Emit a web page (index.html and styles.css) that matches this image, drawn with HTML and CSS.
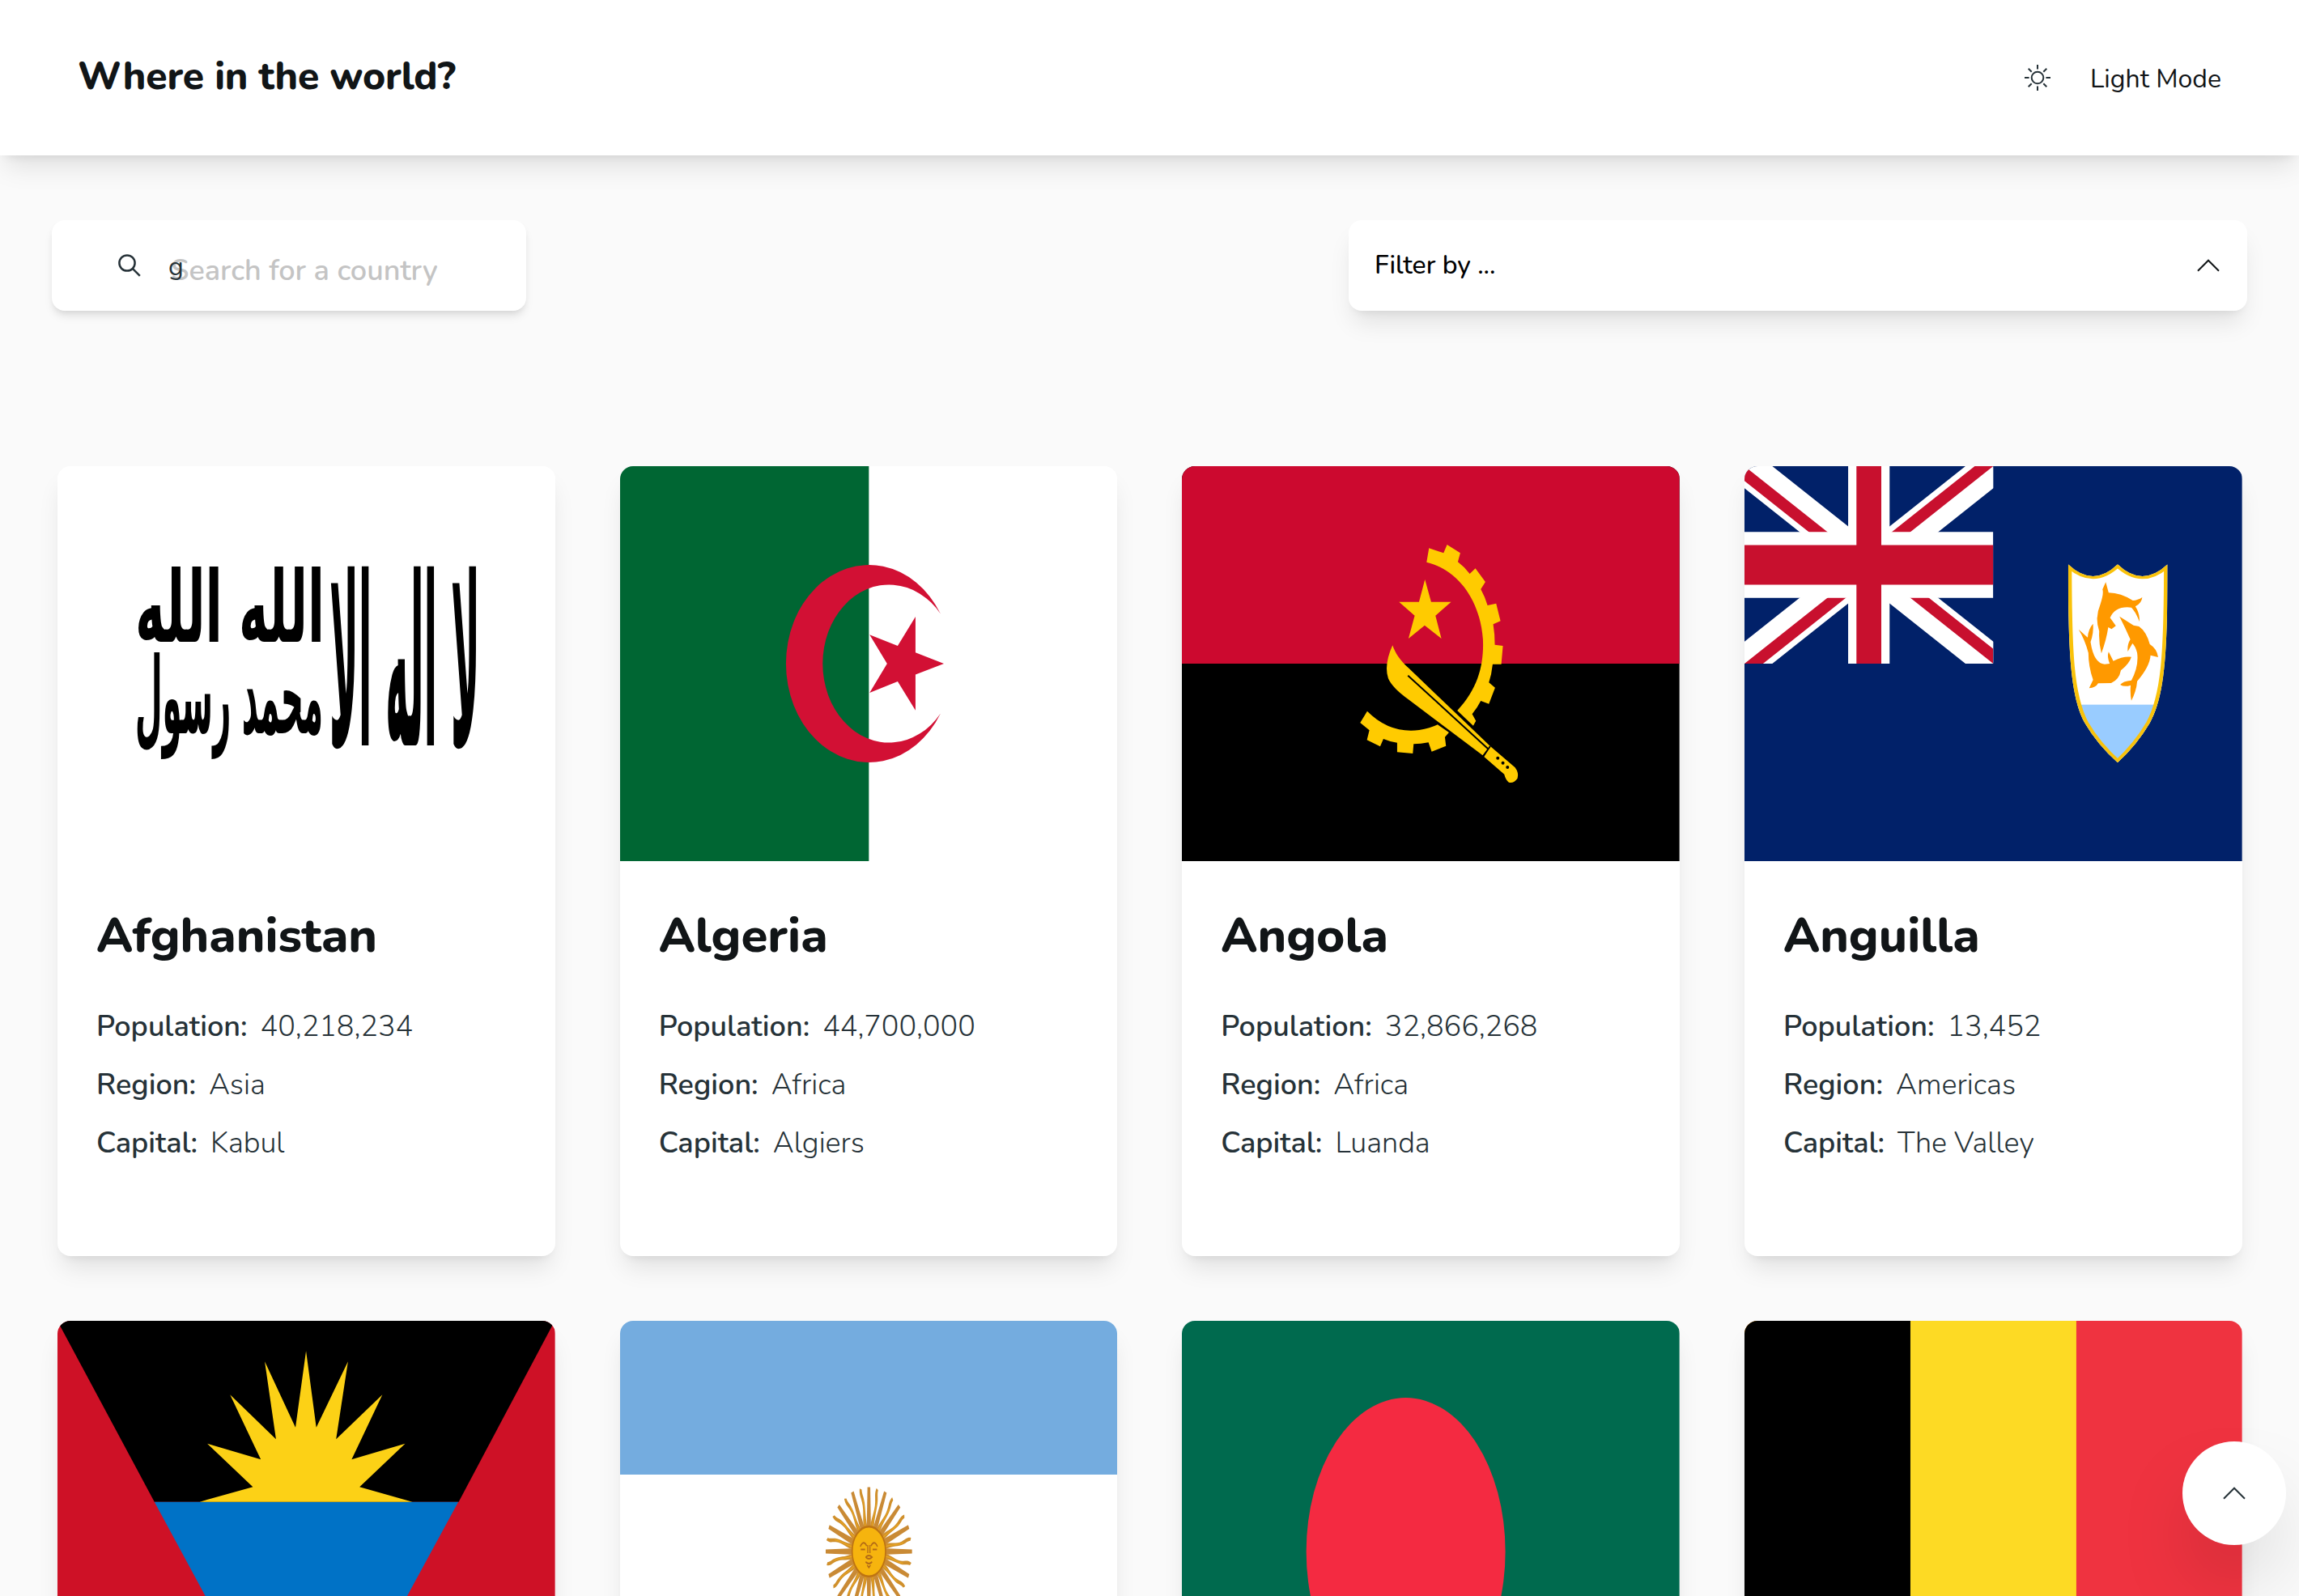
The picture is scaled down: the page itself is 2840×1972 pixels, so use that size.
FILE: index.html
```html
<!DOCTYPE html>
<html lang="en">
<head>
<meta charset="utf-8">
<title>Where in the world?</title>
<link rel="stylesheet" href="styles.css">
</head>
<body>
<header class="header">
  <h1 class="brand">Where in the world?</h1>
  <button class="mode" type="button">
    <svg class="mode-icon" viewBox="0 0 32 32" fill="none" stroke="currentColor" stroke-width="2"><circle cx="16" cy="16" r="7.3"/><path d="M16 0v5.6M16 26.4V32M0 16h5.6M26.4 16H32M4.7 4.7l4 4M23.3 23.3l4 4M4.7 27.3l4-4M23.3 8.7l4-4"/></svg>
    <span class="mode-label">Light Mode</span>
  </button>
</header>
<main class="main">
  <div class="controls">
    <div class="search">
      <svg class="search-icon" viewBox="0 0 28 28" fill="none" stroke="currentColor" stroke-width="2.5"><circle cx="11" cy="11" r="9.6"/><path d="M17.8 17.8l9 9"/></svg>
      <div class="field"><span class="hint">Search for a country</span><span class="typed">g</span></div>
    </div>
    <div class="filter">
      <span class="filter-label">Filter by ...</span>
      <svg class="chevron" viewBox="0 0 28 16" fill="none" stroke="currentColor" stroke-width="2"><path d="M1 14.7L14 1.7l13 13"/></svg>
    </div>
  </div>
  <section class="grid">
    <article class="card">
      <svg class="flag" viewBox="0 0 614.8 488" preserveAspectRatio="none">
        <rect width="614.8" height="488" fill="#fff"/>
        <g class="script" direction="rtl">
          <text transform="translate(522 345) scale(1 3.55)" font-size="82" textLength="186" lengthAdjust="spacingAndGlyphs">لا اله الا</text>
          <text transform="translate(330 217) scale(1 1.5)" font-size="82" textLength="106" lengthAdjust="spacingAndGlyphs">الله</text>
          <text transform="translate(204 217) scale(1 1.5)" font-size="82" textLength="108" lengthAdjust="spacingAndGlyphs">الله</text>
          <text transform="translate(328 330) scale(1 1.6)" font-size="82" textLength="232" lengthAdjust="spacingAndGlyphs">محمد رسول</text>
        </g>
      </svg>
      <div class="info">
        <h2 class="name">Afghanistan</h2>
        <p class="fact"><b>Population:</b><span>40,218,234</span></p>
        <p class="fact"><b>Region:</b><span>Asia</span></p>
        <p class="fact"><b>Capital:</b><span>Kabul</span></p>
      </div>
    </article>
    <article class="card">
      <svg class="flag" viewBox="0 0 614.8 488" preserveAspectRatio="none">
        <rect width="614.8" height="488" fill="#fff"/><rect width="307.4" height="488" fill="#063"/>
        <path fill="#d21034" d="M396 182.5A102.5 122 0 1 0 396 305.5A82 97.6 0 1 1 396 182.5ZM400.1 244L365 230.3V186L343 222 308.3 208.3 329.9 244 308.3 280 343 266 365 301.7V257.5Z"/>
      </svg>
      <div class="info">
        <h2 class="name">Algeria</h2>
        <p class="fact"><b>Population:</b><span>44,700,000</span></p>
        <p class="fact"><b>Region:</b><span>Africa</span></p>
        <p class="fact"><b>Capital:</b><span>Algiers</span></p>
      </div>
    </article>
    <article class="card">
      <svg class="flag" viewBox="0 0 614.8 488" preserveAspectRatio="none">
        <rect width="614.8" height="488"/><rect width="614.8" height="244" fill="#cc092f"/>
        <g transform="translate(180 64) scale(.33333)" fill="#ffcb00">
          <path d="M367 164L376 112 430 130 443 99 492 130 483 163Q506 180 527 207L548 187 585 237 568 264Q585 295 593 324L625 317 641 382 614 394Q620 430 620 470L650 474 644 542 612 542Q608 580 598 610L621 629 598 689 568 678Q555 704 536 727L550 752 540 770 481 714C560 630 580 540 576 450C565 300 480 190 367 164Z"/>
          <path d="M147 716Q230 800 340 786Q380 780 408 766L450 795 435 812 439 845 386 866 374 832Q345 838 319 838L316 873 258 868 258 833Q230 829 207 819L195 847 146 823 155 787 121 759Z"/>
          <path d="M241 472C250 500 270 530 300 556L603 846 575 880 300 673Q240 630 225 595Q208 545 241 472Z"/>
          <path d="M603 846L695 925Q710 945 704 965Q690 985 672 980Q660 970 655 950L580 885Z"/>
          <path d="M298 584L594 855M603 846L577 883" fill="none" stroke="#000" stroke-width="6"/>
          <g fill="#000"><circle cx="631" cy="890" r="6"/><circle cx="650" cy="908" r="6"/><circle cx="667" cy="924" r="6"/></g>
          <path d="M361 228L384 311H458L400 362 422 447 360 398 300 447 323 362 265 311H339Z"/>
        </g>
      </svg>
      <div class="info">
        <h2 class="name">Angola</h2>
        <p class="fact"><b>Population:</b><span>32,866,268</span></p>
        <p class="fact"><b>Region:</b><span>Africa</span></p>
        <p class="fact"><b>Capital:</b><span>Luanda</span></p>
      </div>
    </article>
    <article class="card">
      <svg class="flag" viewBox="0 0 614.8 488" preserveAspectRatio="none">
        <rect width="614.8" height="488" fill="#012169"/>
        <svg width="307.4" height="244" viewBox="0 0 60 30" preserveAspectRatio="none">
          <clipPath id="saltire"><path d="M30 15h30v15zv15H0zH0V0zV0h30z"/></clipPath>
          <path d="M0 0L60 30M60 0L0 30" stroke="#fff" stroke-width="6"/>
          <path d="M0 0L60 30M60 0L0 30" stroke="#c8102e" stroke-width="4" clip-path="url(#saltire)"/>
          <path d="M30 0V30M0 15H60" stroke="#fff" stroke-width="10"/>
          <path d="M30 0V30M0 15H60" stroke="#c8102e" stroke-width="6"/>
        </svg>
        <g transform="matrix(.44643 0 0 .33333 -14.8 -16)">
          <clipPath id="shield"><path id="shield-shape" d="M929 412Q998 500 1066 412Q1134 500 1204 412C1204 760 1195 900 1155 1000Q1120 1080 1066 1147Q1010 1080 975 1000C935 900 929 740 929 412Z"/></clipPath>
          <g clip-path="url(#shield)">
            <rect x="920" y="400" width="300" height="760" fill="#fff"/>
            <rect x="920" y="932" width="300" height="230" fill="#9cf"/>
            <use href="#shield-shape" fill="none" stroke="#f9c20a" stroke-width="20"/>
          </g>
          <g fill="#f90">
            <path d="M1033 478L1041 517Q1075 518 1108 546Q1122 545 1134 534Q1133 555 1115 568Q1128 595 1126 624Q1117 590 1104 572Q1060 565 1045 610L1061 640 1049 652 1040 645Q1035 690 1021 742Q1013 700 1015 660Q1002 610 1018 560Q1028 520 1024 505Z"/>
            <path d="M1071 605L1110 638 1125 642Q1145 660 1155 708Q1175 725 1178 756L1157 749Q1155 790 1120 845Q1118 880 1104 917Q1100 890 1102 860Q1085 868 1073 858Q1080 845 1104 842Q1125 790 1120 740Q1115 715 1107 705L1094 735Q1092 710 1101 690Q1088 650 1071 605Z"/>
            <path d="M958 653L983 683Q985 650 998 632Q1000 665 991 700Q1000 780 1030 782L1044 780Q1036 755 1041 736L1054 770Q1080 752 1104 755Q1098 780 1075 805Q1070 840 1048 852L1012 853Q1005 870 987 871L998 840Q985 790 985 740Q975 690 958 653Z"/>
          </g>
        </g>
      </svg>
      <div class="info">
        <h2 class="name">Anguilla</h2>
        <p class="fact"><b>Population:</b><span>13,452</span></p>
        <p class="fact"><b>Region:</b><span>Americas</span></p>
        <p class="fact"><b>Capital:</b><span>The Valley</span></p>
      </div>
    </article>
    <article class="card">
      <svg class="flag tall" viewBox="0 0 614.8 570" preserveAspectRatio="none">
        <rect width="614.8" height="570" fill="#ce1126"/>
        <g transform="matrix(.40816 0 0 .33333 -10.4 -22)">
          <path d="M25 66H1531L1240 737H319Z"/><path d="M319 737H1239L778 1776Z" fill="#0072c6"/>
          <path fill="#fcd116" d="M456 737L617 682 479 521 641 580 548 340 687 505 653 217 746 461 778 178 809 461 905 217 869 505 1009 340 916 580 1078 521 940 682 1100 737Z"/>
        </g>
      </svg>
    </article>
    <article class="card">
      <svg class="flag tall" viewBox="0 0 614.8 570" preserveAspectRatio="none">
        <rect width="614.8" height="570" fill="#fff"/><rect width="614.8" height="190" fill="#74acdf"/>
        <defs>
          <g id="rays2"><path d="M-8 -50L-5.2 -160H5.2L8 -50Z" fill="#c98a35"/><path transform="rotate(11.25)" d="M-7 -50C-9 -85 3 -100 -1 -125C-3 -140 -8 -145 -3 -160L4 -156C2 -145 8 -138 8 -122C8 -100 3 -85 8 -50Z" fill="#d0902c"/><path transform="rotate(11.25)" d="M0 -60C-2 -90 6 -100 4 -130" stroke="#f0ac1c" stroke-width="2" fill="none"/></g>
          <g id="rays4"><use href="#rays2"/><use href="#rays2" transform="rotate(22.5)"/></g>
          <g id="rays8"><use href="#rays4"/><use href="#rays4" transform="rotate(45)"/></g>
        </defs>
        <g transform="translate(307.4 285) scale(.33333 .497)">
          <use href="#rays8"/><use href="#rays8" transform="rotate(90)"/><use href="#rays8" transform="rotate(180)"/><use href="#rays8" transform="rotate(270)"/>
          <circle r="62" fill="#f6b40e" stroke="#bd7312" stroke-width="5"/>
          <path d="M-32 -12Q-20 -30 -8 -14M32 -12Q20 -30 8 -14M-30 -5H-14M30 -5H14M-4 -16V4M4 -16V4M-12 14Q0 6 12 14Q0 22 -12 14M-12 26Q0 34 12 26M-6 34L0 40 6 34" fill="none" stroke="#b26a16" stroke-width="4"/>
        </g>
      </svg>
    </article>
    <article class="card">
      <svg class="flag tall" viewBox="0 0 614.8 570" preserveAspectRatio="none"><rect width="614.8" height="570" fill="#006a4e"/><ellipse cx="276.7" cy="285" rx="123" ry="190" fill="#f42a41"/></svg>
    </article>
    <article class="card">
      <svg class="flag tall" viewBox="0 0 614.8 570" preserveAspectRatio="none"><rect width="614.8" height="570" fill="#ef3340"/><rect width="410" height="570" fill="#fdda24"/><rect width="205" height="570"/></svg>
    </article>
  </section>
</main>
<button class="to-top" type="button" aria-label="Back to top"><svg class="chevron" viewBox="0 0 28 16" fill="none" stroke="currentColor" stroke-width="2"><path d="M1 14.7L14 1.7l13 13"/></svg></button>
</body>
</html>
```
FILE: styles.css
```css
* { box-sizing: border-box; }
html, body { height: 100%; }
body { margin: 0; overflow: hidden; background: #fafafa; color: #111517; font-family: Nunito, Lato, sans-serif; font-size: 32px; display: flex; flex-direction: column; }
h1, h2, p { margin: 0; }
button { border: 0; background: none; padding: 0; font: inherit; color: inherit; }
svg { display: block; flex: none; }
.header { flex: none; height: 192px; padding: 0 96px; display: flex; align-items: center; justify-content: space-between; background: #fff; box-shadow: 0 20px 30px -6px rgba(0,0,0,.1), 0 8px 12px -8px rgba(0,0,0,.1); }
.brand { padding-bottom: 4px; font-size: 48px; line-height: 64px; font-weight: 800; letter-spacing: -.15px; }
.mode { display: flex; align-items: center; gap: 49px; }
.mode-icon { width: 32px; height: 32px; color: #263238; }
.mode-label { padding-top: 4px; line-height: 48px; }
.main { flex: 1; min-height: 0; padding: 80px 64px 0; }
.controls { display: flex; justify-content: space-between; height: 112px; }
.search { width: 586px; display: flex; align-items: center; gap: 35px; padding-left: 82px; background: #fff; border-radius: 16px; box-shadow: 0 8px 12px -2px rgba(0,0,0,.1), 0 4px 8px -4px rgba(0,0,0,.1); }
.search-icon { width: 28px; height: 28px; color: #263238; }
.field { display: grid; align-items: center; }
.typed, .hint { grid-area: 1 / 1; line-height: 48px; }
.typed { padding-top: 4px; color: #263238; margin-left: -1px; }
.hint { padding: 13px 0 0 2px; color: #c4c4c4; font-size: 36px; font-weight: 600; }
.filter { width: 1110px; display: flex; align-items: center; justify-content: space-between; padding: 0 34px 0 32px; background: #fff; border-radius: 16px; box-shadow: 0 20px 30px -6px rgba(0,0,0,.1), 0 8px 12px -8px rgba(0,0,0,.1); }
.filter-label { padding-bottom: 2px; font-weight: 500; color: #000; }
.chevron { width: 28px; height: 16px; }
.grid { margin: 192px 6.4px 0 7px; display: grid; grid-template-columns: repeat(4, 1fr); gap: 80px; }
.card { overflow: hidden; background: #fff; border-radius: 16px; box-shadow: 0 20px 30px -6px rgba(0,0,0,.1), 0 8px 12px -8px rgba(0,0,0,.1); }
.flag { width: 100%; height: 488px; }
.flag.tall { height: 570px; }
.script { font-family: "DejaVu Sans", sans-serif; font-weight: 700; }
.info { height: 488px; padding: 56px 48px 0; }
.name { margin-bottom: 41px; font-size: 60px; line-height: 72px; font-weight: 800; }
.fact { display: flex; gap: 16px; font-size: 36px; line-height: 72px; }
.fact b { font-weight: 600; color: #263238; }
.fact span { font-weight: 300; color: #263238; }
.to-top { position: absolute; right: 16px; bottom: 63px; width: 128px; height: 128px; display: flex; align-items: center; justify-content: center; border-radius: 50%; background: #fff; color: #263238; box-shadow: 0 50px 100px -24px rgba(0,0,0,.25); }
```
